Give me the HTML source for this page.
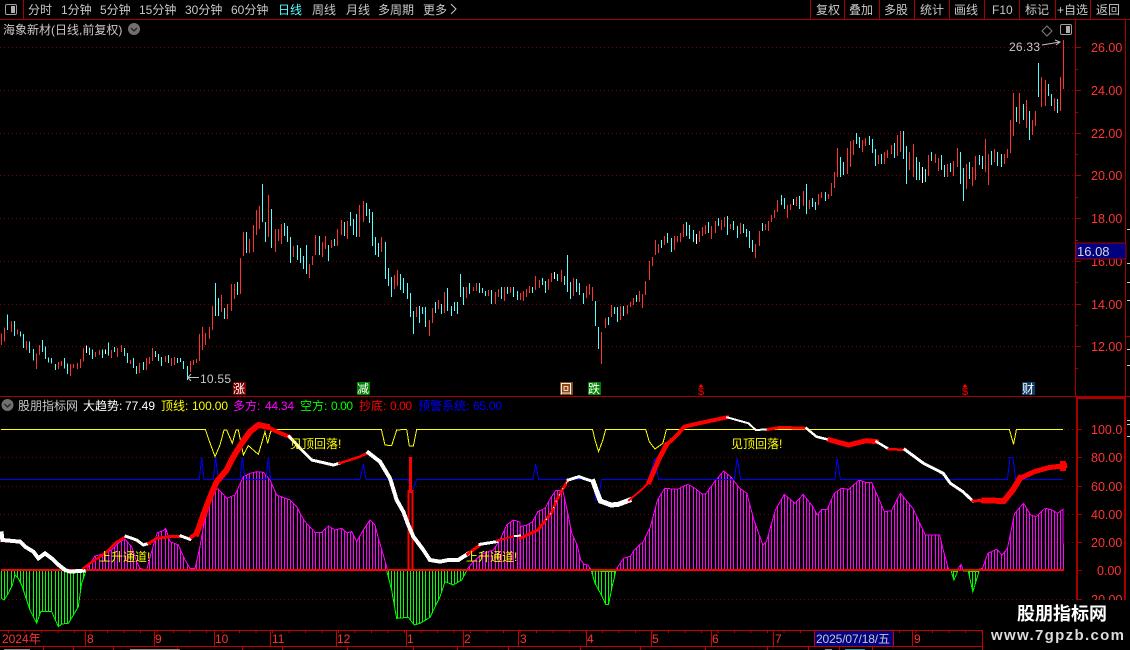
<!DOCTYPE html>
<html><head><meta charset="utf-8"><title>K</title>
<style>
html,body{margin:0;padding:0;background:#000;width:1130px;height:650px;overflow:hidden}
svg{display:block;font-family:"Liberation Sans","WenQuanYi Zen Hei","Noto Sans CJK SC",sans-serif;font-size:12px}
.c{shape-rendering:crispEdges}
.n{vector-effect:non-scaling-stroke;fill:none;stroke-linejoin:miter;shape-rendering:crispEdges}
.g{fill:#c8c8c8}
.ax{fill:#ff3333;font-size:12.5px}
text{white-space:pre}
</style></head><body>
<svg width="1130" height="650" viewBox="0 0 1130 650" xmlns="http://www.w3.org/2000/svg">
<defs>
<pattern id="pm" x="11" y="0" width="22" height="10" patternUnits="userSpaceOnUse"><path class="c" fill="#ff00ff" d="M0 0h1v10h-1zM3 0h1v10h-1zM6 0h1v10h-1zM9 0h1v10h-1zM12 0h1v10h-1zM15 0h1v10h-1zM18 0h1v10h-1z"/></pattern>
<pattern id="pg" x="11" y="0" width="22" height="10" patternUnits="userSpaceOnUse"><path class="c" fill="#00ff00" d="M0 0h1v10h-1zM3 0h1v10h-1zM6 0h1v10h-1zM9 0h1v10h-1zM12 0h1v10h-1zM15 0h1v10h-1zM18 0h1v10h-1z"/></pattern>
<polygon id="m1" class="n" transform="translate(0,500) scale(.33333)" points="250,210 258,212 268,195 285,168 310,162 335,150 360,125 375,118 395,140 410,185 420,205 440,210 452,165 462,130 472,98 490,92 497,85 510,125 535,135 555,180 570,205 585,205 600,140 612,70 630,10 640,-30 655,-33 670,-17 680,-5 705,-15 730,-70 750,-80 770,-85 790,-83 810,-60 830,-15 870,0 890,20 900,40 915,65 945,97 965,97 985,78 1005,90 1025,85 1040,98 1055,95 1070,125 1090,90 1110,60 1125,75 1135,115 1150,165 1162,208 1162,210"/>
<polygon id="m2" class="n" transform="translate(0,500) scale(.33333)" points="1400,210 1420,185 1450,160 1480,150 1500,120 1520,75 1540,60 1560,66 1560,210"/>
<polygon id="m3" class="n" transform="translate(520,470) scale(.35714,.33333)" points="0,300 0,170 20,165 35,155 50,125 70,115 85,85 100,62 120,62 130,110 145,190 160,225 170,270 180,283 190,285 200,300"/>
<polygon id="m4" class="n" transform="translate(520,470) scale(.35714,.33333)" points="268,300 290,265 310,258 320,240 345,215 365,170 385,90 405,55 440,58 470,43 490,55 510,72 520,72 545,35 570,3 590,20 615,55 635,70 655,150 680,225 690,215 715,120 740,73 770,100 793,73 820,110 832,135 845,118 860,118 880,70 900,55 920,58 950,30 970,38 985,38 1010,100 1020,125 1040,122 1065,70 1100,115 1135,195 1175,195 1185,240 1200,298 1225,298 1235,283 1240,298 1285,298 1295,295 1310,250 1335,238 1350,255 1365,235 1385,130 1410,100 1430,135 1445,140 1470,115 1490,120 1505,130 1520,118 1522,298"/>
<polygon id="g1" class="n" transform="translate(0,500) scale(.33333)" points="5,212 5,295 12,300 25,280 37,255 45,225 55,235 65,255 90,330 110,370 122,335 155,335 175,380 185,372 205,370 235,320 245,250 258,212"/>
<polygon id="g2" class="n" transform="translate(0,500) scale(.33333)" points="1160,212 1175,270 1190,355 1225,352 1243,375 1260,370 1290,352 1320,290 1335,245 1360,255 1385,240 1400,212"/>
<polygon id="g3" class="n" transform="translate(520,470) scale(.35714,.33333)" points="200,303 210,340 228,375 240,403 248,403 258,350 268,305"/>
<polygon id="g4" class="n" transform="translate(520,470) scale(.35714,.33333)" points="1207,303 1215,330 1225,305"/>
<polygon id="g5" class="n" transform="translate(520,470) scale(.35714,.33333)" points="1240,303 1255,303 1268,365 1285,305"/>
<clipPath id="cm"><use href="#m1"/><use href="#m2"/><use href="#m3"/><use href="#m4"/></clipPath>
<clipPath id="cg"><use href="#g1"/><use href="#g2"/><use href="#g3"/><use href="#g4"/><use href="#g5"/></clipPath>
</defs>
<rect width="1130" height="650" fill="#000"/>

<!-- grid -->
<g class="c" stroke="#800000" stroke-width="1" stroke-dasharray="1 3" fill="none">
<path d="M0 47.5H1075M0 90.5H1075M0 133.5H1075M0 175.5H1075M0 218.5H1075M0 261.5H1075M0 304.5H1075M0 346.5H1075"/>
<path d="M0 429.5H1076M0 457.5H1076M0 486.5H1076M0 514.5H1076M0 542.5H1076M0 599.5H1076"/>
</g>

<!-- frames -->
<g class="c" stroke="#a80000" fill="none" stroke-width="1">
<path d="M0 19.5H1130M0 396.5H1130M23.5 0V19M1075.5 19V396M1125.5 19V396M1126 336.5H1130"/>
<path d="M810.5 0V19M844.5 0V19M879.5 0V19M914.5 0V19M949.5 0V19M984.5 0V19M1019.5 0V19M1055.5 0V19M1090.5 0V19"/>
<path d="M1075 47.5H1081M1075 90.5H1081M1075 133.5H1081M1075 175.5H1081M1075 218.5H1081M1075 261.5H1081M1075 304.5H1081M1075 346.5H1081M1075 69.5H1078M1075 112.5H1078M1075 154.5H1078M1075 197.5H1078M1075 240.5H1078M1075 282.5H1078M1075 325.5H1078M1075 368.5H1078"/>
<path d="M1077 429.5H1082M1077 457.5H1082M1077 486.5H1082M1077 514.5H1082M1077 542.5H1082M1077 570.5H1082M1077 599.5H1082"/>
<path stroke-width="2" d="M1077 397V600M1125 397V600M1076 398H1126"/>
<path stroke="#c80000" d="M0 630.5H982M0 646.5H982M982.5 630V650"/>
<path stroke="#c80000" d="M85.5 630V646M154.5 630V646M214.5 630V646M270.5 630V646M336.5 630V646M406.5 630V646M463.5 630V646M518.5 630V646M586.5 630V646M651.5 630V646M711.5 630V646M773.5 630V646M814.5 630V646M893.5 630V646M912.5 630V646"/>
<path stroke="#c80000" d="M43.5 646V650M73.5 646V650M113.5 646V650M177.5 646V650M242.5 646V650M282.5 646V650M347.5 646V650M413.5 646V650M457.5 646V650M508.5 646V650M580.5 646V650M640.5 646V650M705.5 646V650M767.5 646V650M808.5 646V650M839.5 646V650M872.5 646V650"/>
<path stroke="#c80000" stroke-width="2" stroke-dasharray="1 15.5" d="M8 632H982"/>
</g>
<path class="c" stroke="#d0d0d0" d="M1127 229.5H1130M1127 263.5H1130M1127 282.5H1130M1127 300.5H1130M1127 349.5H1130M1127 365.5H1130M1127 420.5H1130M1127 424.5H1130M1127 436.5H1130" fill="none"/>
<path class="c" stroke="#888" d="M4 649.5H30M130 649.5H180M825 649.5H832" fill="none"/>
<path class="c" stroke="#39a" d="M845 649.5H865" fill="none"/>

<!-- candles -->
<g class="c" stroke-width="3" fill="none" transform="translate(0,170) scale(.33333)">
<path stroke="#ff3232" d="M4 490V525M13 472V515M34 454V486M52 478V494M79 513V540M109 550V597M118 525V555M175 576V597M184 573V588M211 582V618M220 582V594M232 579V597M241 567V594M250 534V575M286 546V561M298 540V555M334 540V564M352 534V561M364 525V546M391 570V582M418 579V609M439 564V600M448 561V582M457 534V573M496 558V576M514 564V588M523 561V585M571 573V606M580 570V585M589 567V579M598 492V573M607 471V540M616 489V525M628 471V507M637 408V480M664 375V426M682 402V447M694 342V423M703 342V387M721 264V372M730 186V258M748 207V249M760 165V246M769 120V195M778 108V177M805 75V201M826 177V246M835 177V213M844 162V222M880 228V261"/>
<path stroke="#54ffff" d="M22 433V480M43 453V498M61 484V500M70 492V534M88 514V549M100 537V572M127 510V546M136 529V567M145 562V578M154 564V580M166 582V600M193 564V595M202 580V612M268 532V555M277 538V567M307 538V564M325 517V557M343 531V546M373 534V558M382 549V579M400 564V594M409 588V612M430 576V600M466 543V561M475 552V573M484 561V588M505 555V579M532 564V579M541 564V576M550 573V597M562 588V630M646 339V438M655 384V438M673 414V447M712 336V375M739 186V249M787 42V156M796 156V216M814 117V234M853 159V198M862 168V216M871 201V279M892 225V270"/>
<path stroke="#fff" d="M259 526V549M316 538V552"/>
</g>
<g class="c" stroke-width="3" fill="none" transform="translate(300,180) scale(.33333)">
<path stroke="#ff3232" d="M28 252V294M37 228V255M46 165V225M67 186V231M76 168V207M94 180V204M112 147V198M124 120V165M142 123V177M178 75V171M190 63V126M244 171V216M283 285V327M292 270V318M349 381V411M388 420V468M397 384V429M415 360V387M433 336V399M499 321V354M520 321V333M529 309V333M565 330V348M586 336V372M595 327V351M613 321V363M631 321V339M661 339V360M670 333V363M679 327V351M688 318V339M706 288V330M718 300V324M745 297V330M754 279V306M784 270V306M820 294V348M859 318V354M868 312V345M877 321V363M904 456V552M916 414V444M934 375V411"/>
<path stroke="#54ffff" d="M1 204V249M10 228V267M19 195V282M58 168V225M85 195V243M103 177V198M133 126V168M151 96V138M160 117V165M169 102V171M199 69V108M208 87V129M217 96V198M226 171V225M235 189V231M256 186V297M265 264V318M274 291V351M301 282V330M310 294V339M322 309V357M331 339V411M340 393V462M358 378V429M367 381V402M376 381V441M406 366V399M424 372V402M442 324V393M454 378V408M463 366V393M472 366V402M481 282V351M490 321V375M508 309V342M538 309V339M547 324V339M556 333V348M574 330V372M604 321V357M622 321V342M640 321V351M652 333V360M697 321V339M727 294V315M736 303V339M772 282V303M793 288V315M802 225V336M811 306V357M829 297V336M838 309V345M850 339V372M886 363V438M895 441V507M925 411V435M943 381V402M952 381V426"/>
<path stroke="#fff" d="M763 276V297"/>
</g>
<g class="c" stroke-width="3" fill="none" transform="translate(620,120) scale(.33333)">
<path stroke="#ff3232" d="M2 558V600M22 555V582M31 546V561M40 534V555M58 513V546M67 522V564M76 483V525M88 423V480M97 411V438M106 360V405M115 372V399M133 348V375M163 348V390M172 348V366M181 339V366M190 312V351M238 333V366M247 321V348M256 315V342M274 318V357M286 303V339M304 300V330M313 291V321M331 312V327M361 309V342M406 372V414M418 333V378M436 312V330M445 303V333M454 285V306M463 270V294M472 240V276M502 255V294M511 252V270M529 231V258M550 213V258M568 240V267M595 222V255M604 216V234M625 222V237M634 189V228M643 156V204M652 84V171M682 84V162M691 63V141M700 60V105M727 60V96M736 54V78M775 105V132M793 96V132M802 90V114M814 75V102M832 45V108M841 33V96M868 96V150M880 72V171M925 105V168M946 102V129M955 114V153M982 132V171M1000 123V168M1012 84V141M1039 132V207M1057 141V198M1066 108V180M1096 57V156M1105 102V195M1123 87V126M1153 102V132M1162 87V114"/>
<path stroke="#54ffff" d="M10 558V588M49 525V546M124 360V384M142 339V369M154 354V396M199 306V348M208 315V357M220 330V366M265 306V339M295 294V318M322 288V345M340 303V330M352 318V354M370 312V339M379 327V351M388 333V384M397 360V396M427 309V333M484 225V255M493 234V267M538 228V267M559 192V282M577 234V261M586 246V270M616 216V243M661 111V171M670 126V165M709 39V72M718 51V84M748 48V75M757 57V99M766 87V138M784 102V132M823 69V114M850 33V117M859 78V192M889 111V180M898 126V180M916 147V186M934 96V123M964 105V150M973 135V171M991 129V156M1021 96V192M1030 144V243M1048 126V177M1078 105V135M1087 108V147M1114 93V135M1132 96V138M1144 102V141"/>
<path stroke="#fff" d="M229 342V372M520 237V255M907 141V189"/>
</g>
<g class="c" stroke-width="3" fill="none" transform="translate(1000,50) scale(.33333)">
<path stroke="#ff3232" d="M31 210V309M40 129V258M58 129V222M79 150V234M97 210V255M106 183V228M124 81V171M136 90V168M163 144V183M181 81V183M190 -30V117"/>
<path stroke="#54ffff" d="M49 171V216M70 162V210M88 183V270M115 39V141M145 102V138M154 132V168M172 147V189"/>
</g>

<!-- histogram -->
<g clip-path="url(#cm)"><rect class="c" x="0" y="460" width="1064" height="112" fill="url(#pm)"/></g>
<g clip-path="url(#cg)"><rect class="c" x="0" y="568" width="1064" height="62" fill="url(#pg)"/></g>
<g stroke="#ff00ff" stroke-width="1" fill="none"><use href="#m1"/><use href="#m2"/><use href="#m3"/><use href="#m4"/></g>
<g stroke="#00ff00" stroke-width="1" fill="none"><use href="#g1"/><use href="#g2"/><use href="#g3"/><use href="#g4"/><use href="#g5"/></g>
<rect class="c" x="1" y="569" width="1063" height="2" fill="#ff0000"/>

<!-- blue + yellow -->
<g transform="translate(0,375) scale(.33333)">
<polyline class="n" stroke="#0000ff" stroke-width="1" points="0,313 598,313 605,247 612,313 640,313 647,247 655,313 720,313 727,247 735,313 798,313 805,247 812,313 1080,313 1090,268 1098,313 1225,313 1235,355 1250,313 1560,313"/>
<polyline class="n" stroke="#ffff00" stroke-width="1" points="3,163 616,163 625,190 645,245 660,210 672,165 680,165 697,205 708,165 715,165 730,240 745,212 775,238 795,170 803,205 812,170 820,163 1144,163 1155,210 1175,212 1190,165 1220,163 1228,213 1240,213 1250,163 1560,163"/>
</g>
<g transform="translate(520,375) scale(.35714,.33333)">
<polyline class="n" stroke="#0000ff" stroke-width="1" points="0,313 36,313 44,268 52,313 205,313 212,375 220,375 228,313 360,313 378,250 388,313 600,313 608,250 618,313 882,313 888,250 897,313 1365,313 1372,247 1380,247 1388,313 1520,313"/>
<polyline class="n" stroke="#ffff00" stroke-width="1" points="0,163 203,163 210,195 220,230 232,195 240,163 352,163 362,200 378,222 400,205 410,163 1370,163 1382,208 1390,163 1520,163"/>
</g>

<!-- spike -->
<path class="c" fill="none" stroke="#ff0000" stroke-width="2" d="M408.5 490V570M412.5 490V570"/>
<rect class="c" x="409" y="457" width="3" height="36" fill="#ff0000"/>

<!-- main thick line -->
<g transform="translate(0,500) scale(.33333)" stroke-linecap="square">
<polyline class="n" stroke="#fff" stroke-width="4" points="5,100 7,120 60,125 75,140 100,155 115,175 135,160 155,175 170,190 195,210 210,215 250,212"/>
<polyline class="n" stroke="#ff0000" stroke-width="2.5" points="250,205 270,190 300,170 320,155"/>
<polyline class="n" stroke="#fff" stroke-width="1.5" points="320,155 345,130 375,110"/>
<polyline class="n" stroke="#ff0000" stroke-width="2.5" stroke-dasharray="4 2" points="320,155 345,130 378,109"/>
<polyline class="n" stroke="#fff" stroke-width="3" points="378,109 410,120 430,135 447,130"/>
<polyline class="n" stroke="#ff0000" stroke-width="3" points="447,130 470,115 510,110 543,110"/>
<polyline class="n" stroke="#fff" stroke-width="3" points="543,108 570,118 575,110"/>
<polyline class="n" stroke="#ff0000" stroke-width="4" points="575,110 590,100"/>
<polyline class="n" stroke="#ff0000" stroke-width="6" points="590,100 600,75 610,45 625,5 635,-20 650,-55 680,-90 700,-130 725,-170 750,-205 775,-225 800,-220"/>
<polyline class="n" stroke="#ff0000" stroke-width="4" points="800,-220 830,-205 868,-190"/>
<polyline class="n" stroke="#fff" stroke-width="3" points="868,-190 905,-150 935,-120 1000,-105 1018,-110"/>
<polyline class="n" stroke="#ff0000" stroke-width="2.5" points="1018,-110 1080,-130 1105,-142"/>
<polyline class="n" stroke="#fff" stroke-width="4" points="1105,-142 1140,-115 1170,-65 1190,0 1210,35 1225,75 1240,110 1270,150 1290,180 1320,185 1345,180 1375,180 1403,162"/>
<polyline class="n" stroke="#ff0000" stroke-width="3" points="1403,162 1440,135"/>
<polyline class="n" stroke="#fff" stroke-width="3" points="1440,133 1490,125"/>
<polyline class="n" stroke="#ff0000" stroke-width="2" points="1490,122 1545,108"/>
<polyline class="n" stroke="#fff" stroke-width="2" points="1545,108 1560,107"/>
</g>
<g transform="translate(520,375) scale(.35714,.33333)" stroke-linecap="square">
<polyline class="n" stroke="#ff0000" stroke-width="3" points="0,490 50,465 65,445"/>
<polyline class="n" stroke="#fff" stroke-width="1.5" points="65,445 90,410 105,370 118,345 135,315"/>
<polyline class="n" stroke="#ff0000" stroke-width="3" stroke-dasharray="3 4" points="65,445 90,410 105,370 118,345 135,315"/>
<polyline class="n" stroke="#fff" stroke-width="3" points="135,315 165,305 205,320"/>
<polyline class="n" stroke="#fff" stroke-width="5" points="205,320 215,350 225,378 255,390 275,388 305,376"/>
<polyline class="n" stroke="#ff0000" stroke-width="2" points="305,376 345,340 362,320"/>
<polyline class="n" stroke="#ff0000" stroke-width="5" points="362,320 372,295 390,250 410,210"/>
<polyline class="n" stroke="#ff0000" stroke-width="4" points="410,210 440,180 460,155 500,145 580,127"/>
<polyline class="n" stroke="#fff" stroke-width="2" points="580,127 640,145 660,165 695,163"/>
<polyline class="n" stroke="#ff0000" stroke-width="3" points="695,163 730,157 802,160"/>
<polyline class="n" stroke="#fff" stroke-width="2.5" points="802,160 830,185 868,195"/>
<polyline class="n" stroke="#ff0000" stroke-width="5" points="868,195 920,210 970,197 998,200"/>
<polyline class="n" stroke="#fff" stroke-width="2.5" points="998,200 1032,222"/>
<polyline class="n" stroke="#ff0000" stroke-width="2.5" points="1032,223 1078,224"/>
<polyline class="n" stroke="#fff" stroke-width="3" points="1078,224 1130,265 1185,295 1205,325 1240,350 1268,378"/>
<polyline class="n" stroke="#ff0000" stroke-width="3" points="1268,378 1300,376"/>
<polyline class="n" stroke="#ff0000" stroke-width="6" points="1300,376 1355,378 1380,345 1400,310"/>
<polyline class="n" stroke="#ff0000" stroke-width="5" points="1400,310 1440,290 1480,278 1525,272"/>
</g>
<rect class="c" x="1060" y="461" width="6" height="10" fill="#ff0000"/>

<!-- top bar text -->
<g class="g">
<text x="28" y="14">分时</text><text x="61" y="14">1分钟</text><text x="100" y="14">5分钟</text><text x="139" y="14">15分钟</text><text x="185" y="14">30分钟</text><text x="231" y="14">60分钟</text>
<text x="278" y="14" style="fill:#54ffff">日线</text>
<text x="312" y="14">周线</text><text x="346" y="14">月线</text><text x="378" y="14">多周期</text><text x="423" y="14">更多</text>
<text x="816" y="14">复权</text><text x="849" y="14">叠加</text><text x="884" y="14">多股</text><text x="920" y="14">统计</text><text x="954" y="14">画线</text><text x="992" y="14">F10</text><text x="1025" y="14">标记</text><text x="1057" y="14">+自选</text><text x="1096" y="14">返回</text>
<text x="3" y="34">海象新材(日线,前复权)</text>
<text x="1009" y="51" textLength="31">26.33</text>
<text x="200" y="383" textLength="31">10.55</text>
<text x="18" y="410">股朋指标网</text>
</g>
<path fill="none" stroke="#c8c8c8" d="M451 4L456 9L451 14"/>
<!-- top icons -->
<g fill="none">
<rect x="5.5" y="4.5" width="11" height="10" rx="1.5" stroke="#a0a0a0"/><rect class="c" x="11" y="6" width="4" height="7" fill="#b0b0b0"/>
<rect x="1060.5" y="24.5" width="11" height="10" rx="1.5" stroke="#a0a0a0"/><rect class="c" x="1066" y="26" width="4" height="7" fill="#b0b0b0"/>
<path d="M1047 26L1052 31L1047 36L1042 31Z" stroke="#808080"/>
<circle cx="134" cy="29" r="6" fill="#707070"/><path d="M131 28L134 31L137 28" stroke="#222" stroke-width="1.3"/>
<circle cx="7.5" cy="405" r="6" fill="#707070"/><path d="M4.5 404L7.5 407L10.5 404" stroke="#222" stroke-width="1.3"/>
<path d="M1042 45L1060 42M1055 40L1060 42L1056 45" stroke="#c0c0c0"/>
<path d="M188 377.5H199M191 374L188 377.5L191 381" stroke="#c0c0c0"/>
</g>

<!-- y labels -->
<g class="ax">
<text x="1091" y="52">26.00</text><text x="1091" y="95">24.00</text><text x="1091" y="138">22.00</text><text x="1091" y="180">20.00</text><text x="1091" y="223">18.00</text><text x="1091" y="266">16.00</text><text x="1091" y="309">14.00</text><text x="1091" y="351">12.00</text>
<text x="1091" y="434">100.0</text><text x="1091" y="462">80.00</text><text x="1091" y="491">60.00</text><text x="1091" y="519">40.00</text><text x="1091" y="547">20.00</text><text x="1097" y="575">0.00</text><text x="1087" y="604">-20.00</text>
</g>
<rect class="c" x="1076" y="243" width="50" height="16" fill="#000080" stroke="#a80000"/>
<text x="1077" y="256" fill="#d8d8d8" font-size="13">16.08</text>

<!-- signals -->
<g class="c">
<rect x="233" y="382" width="13" height="13" fill="#800000"/><rect x="357" y="382" width="13" height="13" fill="#008000"/><rect x="560" y="382" width="13" height="13" fill="#8b4513"/><rect x="588" y="382" width="13" height="13" fill="#008000"/><rect x="1022" y="382" width="13" height="13" fill="#0f3d66"/>
</g>
<g fill="#fff"><text x="233" y="393">涨</text><text x="357" y="393">减</text><text x="560" y="393">回</text><text x="588" y="393">跌</text><text x="1022" y="393">财</text></g>
<g fill="#ff0000" font-size="11"><text x="698" y="395">$</text><text x="962" y="395">$</text></g>
<path d="M701 384L698.5 387H703.5ZM965 384L962.5 387H967.5Z" fill="#ff0000"/>

<!-- legend -->
<text x="83" y="410" fill="#fff">大趋势:</text><text x="125" y="410" fill="#fff" textLength="30">77.49</text>
<text x="161" y="410" fill="#ffff00">顶线:</text><text x="192" y="410" fill="#ffff00" textLength="36">100.00</text>
<text x="233" y="410" fill="#ff00ff">多方:</text><text x="265" y="410" fill="#ff00ff" textLength="29">44.34</text>
<text x="300" y="410" fill="#00ff00">空方:</text><text x="331" y="410" fill="#00ff00" textLength="22">0.00</text>
<text x="359" y="410" fill="#ff0000">抄底:</text><text x="390" y="410" fill="#ff0000" textLength="22">0.00</text>
<text x="418" y="410" fill="#0000ff">预警系统:</text><text x="473" y="410" fill="#0000ff" textLength="29">65.00</text>

<!-- labels -->
<g fill="#ffff00">
<text x="290" y="448">见顶回落!</text><text x="731" y="448">见顶回落!</text>
<text x="99" y="561">上升通道!</text><text x="466" y="561">上升通道!</text>
</g>

<!-- x axis -->
<g fill="#ff3333">
<text x="2" y="643">2024年</text><text x="87" y="643">8</text><text x="155" y="643">9</text><text x="215" y="643">10</text><text x="272" y="643">11</text><text x="337" y="643">12</text><text x="407" y="643">1</text><text x="464" y="643">2</text><text x="520" y="643">3</text><text x="587" y="643">4</text><text x="652" y="643">5</text><text x="712" y="643">6</text><text x="775" y="643">7</text><text x="914" y="643">9</text>
</g>
<rect class="c" x="815" y="631" width="78" height="15" fill="#000080"/>
<text x="816" y="643" fill="#c8c8c8" textLength="74">2025/07/18/五</text>

<!-- watermark -->
<rect class="c" x="985" y="600" width="145" height="50" fill="#000"/>
<text x="1017" y="620" fill="#fff" font-size="18" font-weight="700" style='font-family:"Noto Sans CJK SC",sans-serif'>股朋指标网</text>
<text x="991" y="640" fill="#dcdcdc" font-size="15" font-weight="700" textLength="133">www.7gpzb.com</text>
</svg>
</body></html>
